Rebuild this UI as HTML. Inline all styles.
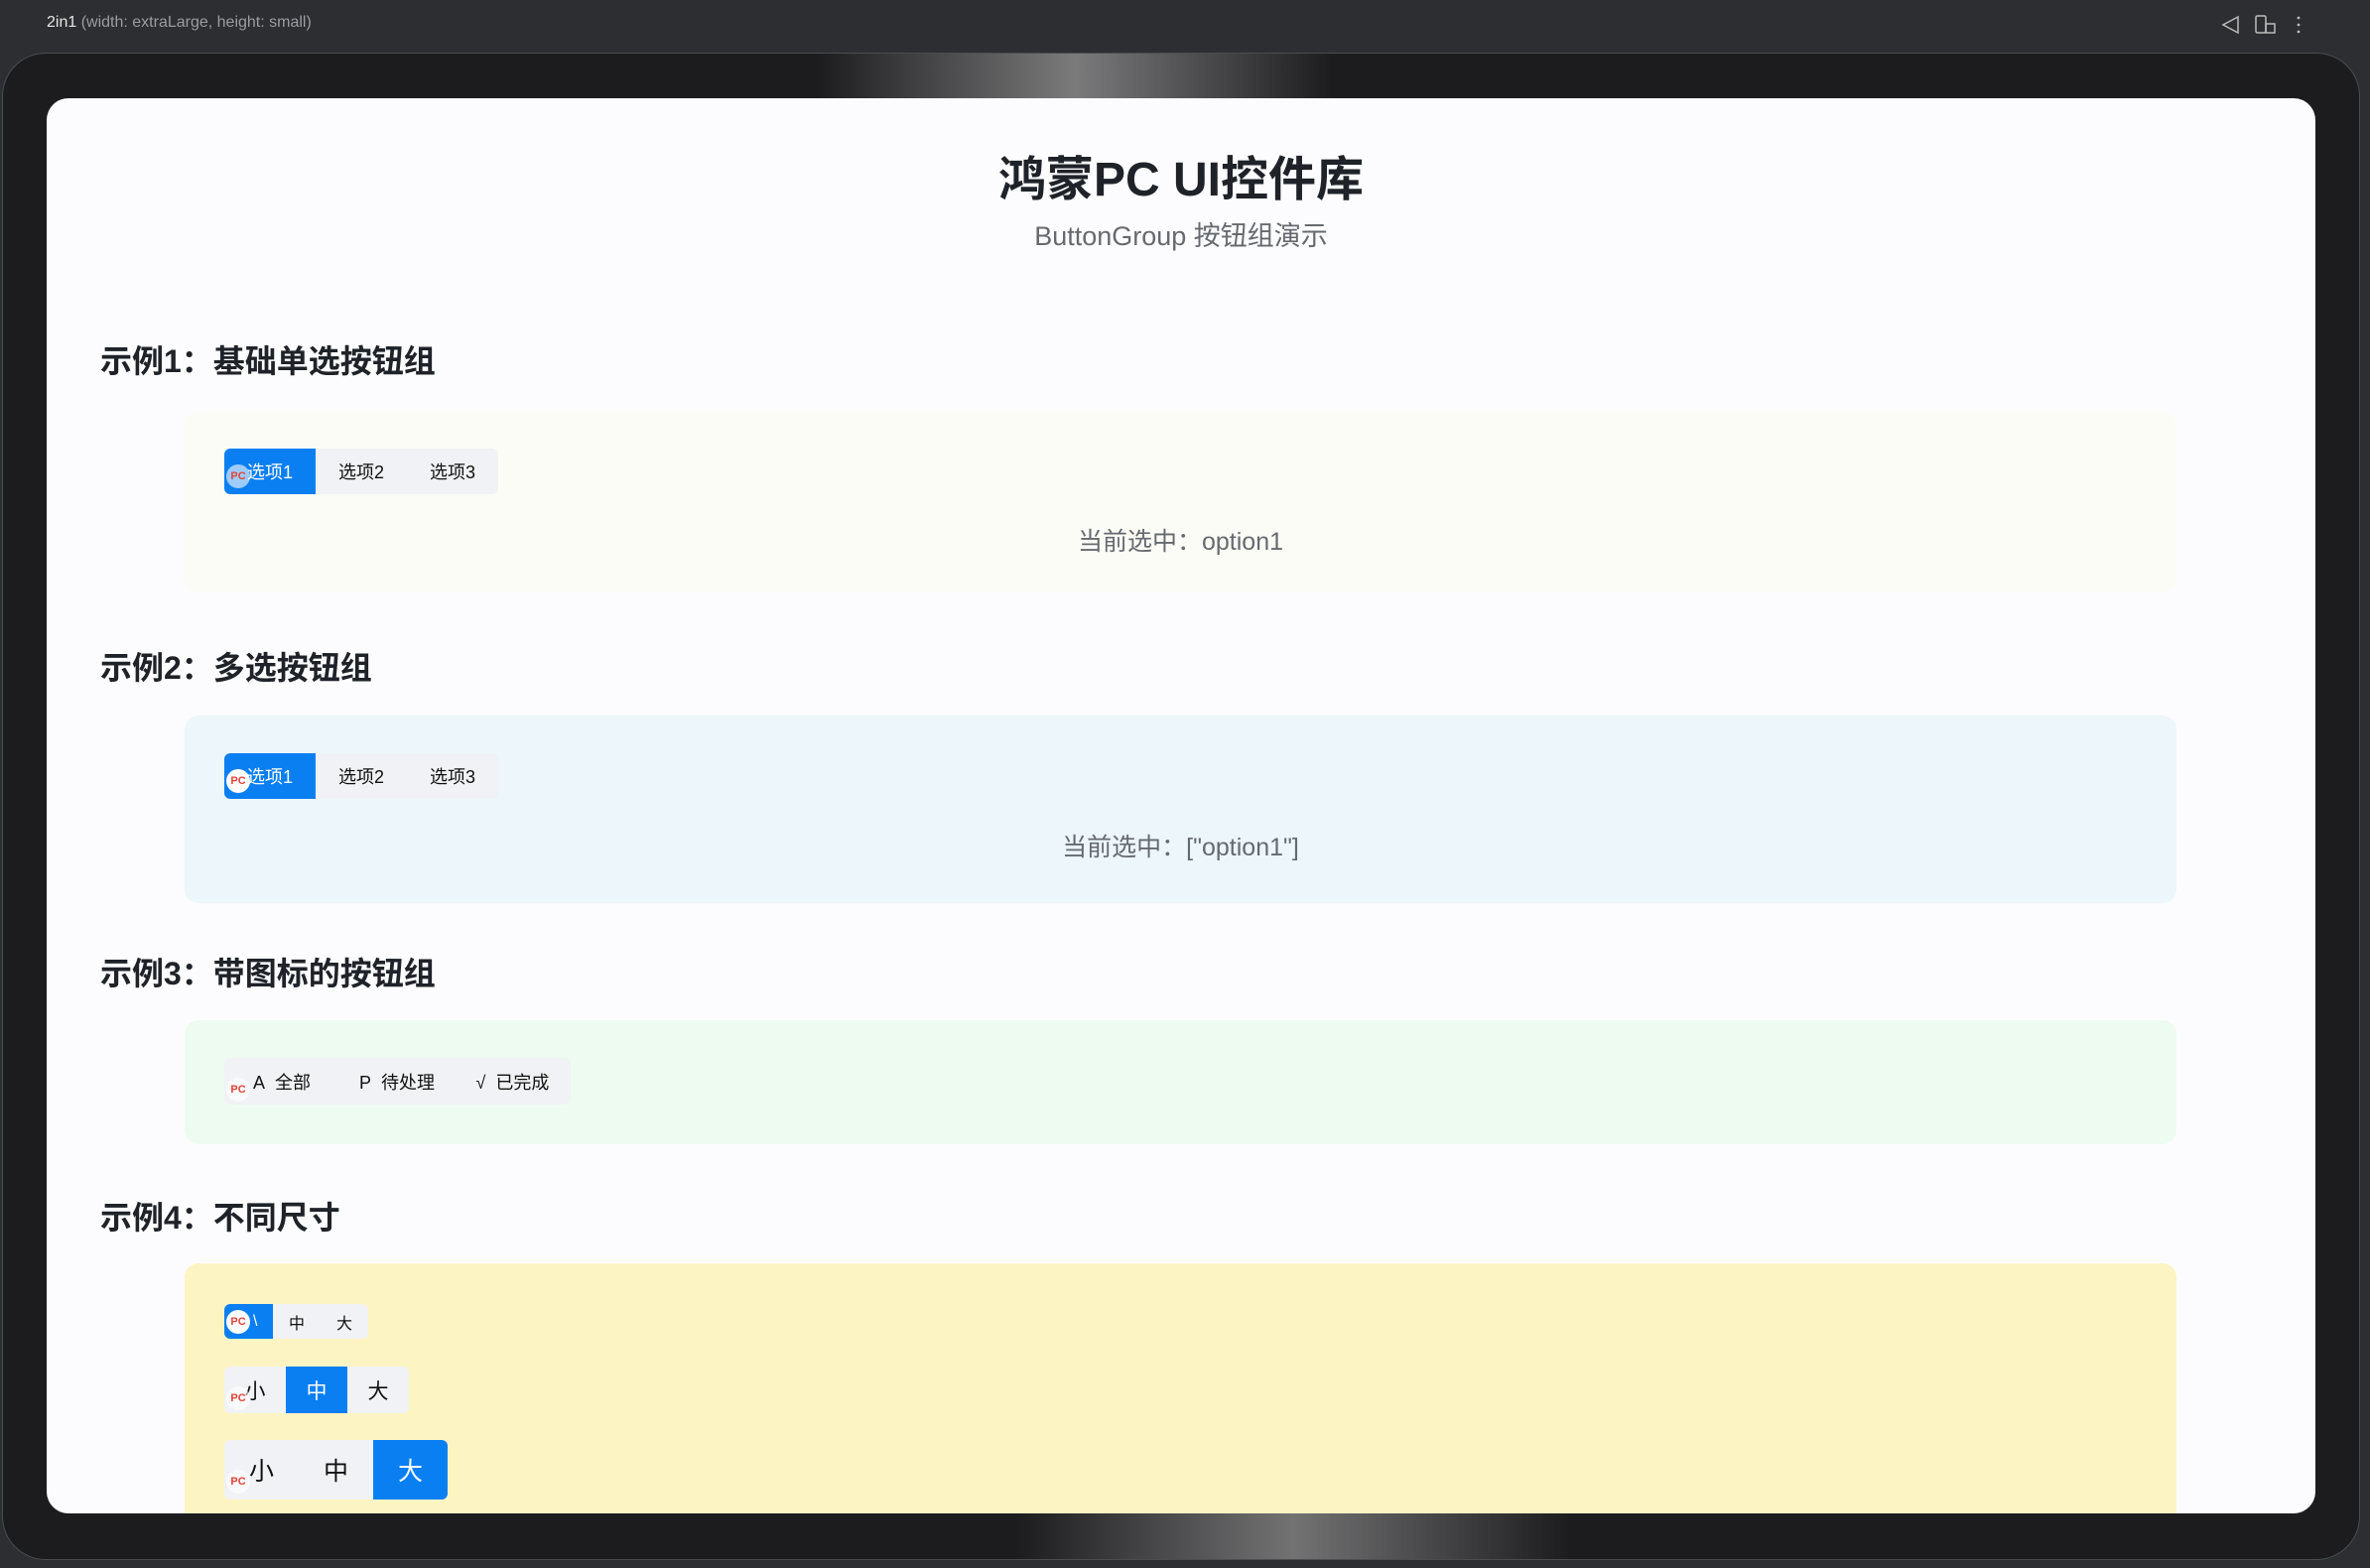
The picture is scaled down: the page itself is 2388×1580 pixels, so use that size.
<!DOCTYPE html>
<html><head><meta charset="utf-8"><style>
*{margin:0;padding:0;box-sizing:border-box}
body{width:2388px;height:1580px;background:#2c2e31;position:relative;overflow:hidden;font-family:"Liberation Sans","Noto Sans CJK SC",sans-serif}
.top{position:absolute;left:47px;top:14px;font-size:16px;color:#9a9ca0}
.top b{color:#e6e6e6;font-weight:normal}
.frame{position:absolute;left:2px;top:53px;width:2376px;height:1519px;background:#1c1c1e;border-radius:44px;border:1.5px solid #4a4d50;overflow:hidden}
.glow{position:absolute;left:820px;top:0;width:520px;height:46px;background:linear-gradient(90deg,rgba(255,255,255,0),rgba(200,200,200,.55) 50%,rgba(255,255,255,0))}
.glow2{position:absolute;left:1020px;bottom:0;width:560px;height:46px;background:linear-gradient(90deg,rgba(255,255,255,0),rgba(200,200,200,.5) 50%,rgba(255,255,255,0))}
.screen{position:absolute;left:47px;top:99px;width:2286px;height:1426px;background:#fcfcfe;border-radius:22px;overflow:hidden}
h1{position:absolute;left:0;width:100%;top:42px;text-align:center;font-size:48px;font-weight:bold;color:#1f2329}
.sub{position:absolute;left:0;width:100%;top:117px;text-align:center;font-size:27px;color:#666a70}
h2{position:absolute;left:54px;font-size:32px;font-weight:bold;color:#1f2329}
.box{position:absolute;left:139px;width:2007px;border-radius:14px}
.grp{position:absolute;left:40px;display:flex;background:#f1f2f5;border-radius:6px;overflow:hidden}
.grp span{display:flex;align-items:center;justify-content:center;color:#111;position:relative}
.grp .on{background:#0a7ff2;color:#fff}
.pc{position:absolute;width:24px;height:24px;border-radius:50%;background:#fff;color:#e0443a;font-size:11px;font-weight:bold;display:flex;align-items:center;justify-content:center;font-style:normal}
.pc.t{background:rgba(255,255,255,.6)}
.cur{position:absolute;left:0;width:100%;text-align:center;font-size:25px;color:#666a70}
</style></head><body>
<div class="top"><b>2in1</b> (width: extraLarge, height: small)</div>
<svg style="position:absolute;left:2235px;top:14px" width="120" height="22" viewBox="0 0 120 22"><path d="M20 3 L5 11 L20 19 Z" fill="none" stroke="#bbb" stroke-width="1.5"/><rect x="38" y="2" width="10" height="17" rx="1.5" fill="none" stroke="#bbb" stroke-width="1.5"/><rect x="48" y="10" width="9" height="9" fill="none" stroke="#bbb" stroke-width="1.5"/><circle cx="81" cy="4" r="1.4" fill="#bbb"/><circle cx="81" cy="11" r="1.4" fill="#bbb"/><circle cx="81" cy="18" r="1.4" fill="#bbb"/></svg>
<div class="frame"><div class="glow"></div><div class="glow2"></div></div>
<div class="screen">
<h1>鸿蒙PC UI控件库</h1>
<div class="sub">ButtonGroup 按钮组演示</div>

<h2 style="top:240px">示例1：基础单选按钮组</h2>
<div class="box" style="top:316px;height:182px;background:#fcfcf6">
 <div class="grp" style="top:37px;height:46px"><span class="on" style="width:92px;font-size:18px">选项1<i class="pc t" style="left:2px;top:16px">PC</i></span><span style="width:92px;font-size:18px">选项2</span><span style="width:92px;font-size:18px">选项3</span></div>
 <div class="cur" style="top:111px">当前选中：option1</div>
</div>

<h2 style="top:549px">示例2：多选按钮组</h2>
<div class="box" style="top:622px;height:189px;background:#ecf6fb">
 <div class="grp" style="top:38px;height:46px"><span class="on" style="width:92px;font-size:18px">选项1<i class="pc" style="left:2px;top:16px">PC</i></span><span style="width:92px;font-size:18px">选项2</span><span style="width:92px;font-size:18px">选项3</span></div>
 <div class="cur" style="top:113px">当前选中：["option1"]</div>
</div>

<h2 style="top:857px">示例3：带图标的按钮组</h2>
<div class="box" style="top:929px;height:125px;background:#eefbf1">
 <div class="grp" style="top:38px;height:47px"><span style="width:116px;font-size:18px">A&nbsp; 全部<i class="pc t" style="left:2px;top:20px">PC</i></span><span style="width:116px;font-size:18px">P&nbsp; 待处理</span><span style="width:117px;font-size:18px">√&nbsp; 已完成</span></div>
</div>

<h2 style="top:1103px">示例4：不同尺寸</h2>
<div class="box" style="top:1174px;height:300px;background:#fdf4c3">
 <div class="grp" style="top:41px;height:35px"><span class="on" style="width:49px;font-size:16px">&nbsp;&nbsp;&nbsp;\<i class="pc" style="left:2px;top:6px">PC</i></span><span style="width:48px;font-size:16px">中</span><span style="width:48px;font-size:16px">大</span></div>
 <div class="grp" style="top:104px;height:47px"><span style="width:62px;font-size:21px">小<i class="pc t" style="left:2px;top:20px">PC</i></span><span class="on" style="width:62px;font-size:21px">中</span><span style="width:62px;font-size:21px">大</span></div>
 <div class="grp" style="top:178px;height:60px"><span style="width:75px;font-size:25px">小<i class="pc t" style="left:2px;top:30px">PC</i></span><span style="width:75px;font-size:25px">中</span><span class="on" style="width:75px;font-size:25px">大</span></div>
</div>
</div>
</body></html>
